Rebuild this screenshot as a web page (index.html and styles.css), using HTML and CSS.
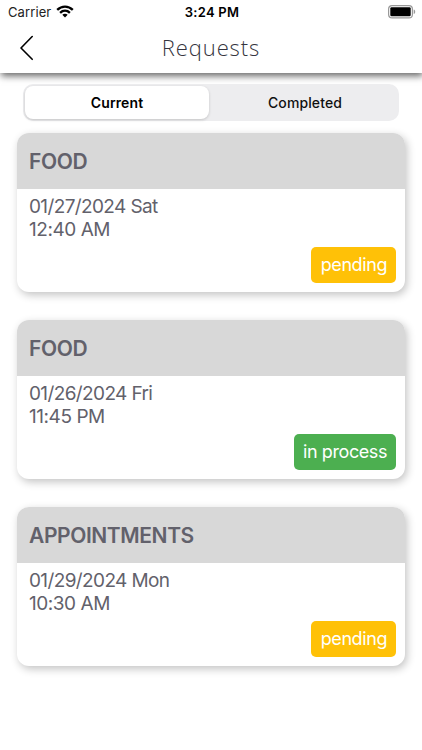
FILE: index.html
```html
<!DOCTYPE html>
<html lang="en">
<head>
<meta charset="utf-8">
<title>Requests</title>
<link rel="stylesheet" href="styles.css">
</head>
<body>
<header class="top">
  <div class="status">
    <div class="carrier"><span>Carrier</span>
      <svg width="18" height="13" viewBox="0 0 18 13" fill="none" stroke="#000" stroke-width="2.4"><path d="M1.2 4.8C5.8.5 12.2.5 16.8 4.8M4.1 7.8c2.9-2.7 6.9-2.7 9.8 0"/><path d="M6.3 9.8c1.6-1.4 3.8-1.4 5.4 0L9 12.6z" fill="#000" stroke="none"/></svg>
    </div>
    <time class="clock">3:24 PM</time>
    <svg class="battery" width="28" height="14" viewBox="0 0 28 14"><rect x=".6" y=".6" width="23.8" height="12.3" rx="3.5" fill="none" stroke="#999" stroke-width="1.2"/><rect x="2.3" y="2.3" width="20.4" height="8.9" rx="1.2"/><path d="M25.7 4.5c2 .6 2 3.9 0 4.5z" fill="#999"/></svg>
  </div>
  <nav class="bar">
    <svg class="back" width="14" height="26" viewBox="0 0 14 26" fill="none" stroke="#000" stroke-width="1.6" stroke-linecap="round" stroke-linejoin="round"><path d="M12.2 1.5 1 13l11.2 11.3"/></svg>
    <h1>Requests</h1>
  </nav>
</header>
<main>
  <div class="tabs"><button class="tab active">Current</button><button class="tab">Completed</button></div>
  <article class="card">
    <h2>FOOD</h2>
    <div class="body"><div><p class="date">01/27/2024 Sat</p><p>12:40 AM</p></div><span class="badge pending">pending</span></div>
  </article>
  <article class="card">
    <h2>FOOD</h2>
    <div class="body"><div><p class="date">01/26/2024 Fri</p><p>11:45 PM</p></div><span class="badge process">in process</span></div>
  </article>
  <article class="card">
    <h2>APPOINTMENTS</h2>
    <div class="body"><div><p class="date">01/29/2024 Mon</p><p>10:30 AM</p></div><span class="badge pending">pending</span></div>
  </article>
</main>
</body>
</html>
```
FILE: styles.css
```css
* { box-sizing: border-box; }
body { margin: 0; height: 750px; overflow: hidden; background: #fff; font-family: Inter, sans-serif; color: #000; }
.top { height: 73px; background: #fff; box-shadow: 1px 3px 7px rgba(0,0,0,.6); }
.status { height: 23px; display: grid; grid-template-columns: 1fr auto 1fr; align-items: center; padding: 0 6px 0 8px; }
.carrier { display: flex; align-items: center; gap: 5px; font-size: 13px; letter-spacing: .1px; color: #222; }
.clock { font-size: 13px; font-weight: 600; letter-spacing: .25px; }
.battery { justify-self: end; }
.bar { height: 50px; display: grid; grid-template-columns: 1fr auto 1fr; align-items: center; padding: 0 19.5px; }
h1 { margin: 0; padding-bottom: 2px; font: 300 22px/30px "Open Sans", sans-serif; letter-spacing: .9px; color: #353540; }
main { padding: 11px 17px 0; }
.tabs { display: flex; height: 37px; margin: 0 6px 12px; padding: 2px; border-radius: 10px; background: #ededef; }
.tab { flex: 1; border: 0; padding: 0 0 0 4px; border-radius: 8px; background: none; font: 500 14px Inter, sans-serif; letter-spacing: .12px; color: #111; }
.tab.active { flex: 0 0 184px; padding: 0; background: #fff; font-weight: 600; color: #000; box-shadow: 0 1px 3px rgba(0,0,0,.18); }
.card { height: 159px; margin-bottom: 28px; border-radius: 12px; background: #fff; box-shadow: 2px 3px 8px rgba(0,0,0,.24); color: #62616b; }
h2 { height: 56px; margin: 0; padding: 1px 12px 0; border-radius: 12px 12px 0 0; background: #d8d8d8; font-size: 21px; line-height: 56px; font-weight: 600; letter-spacing: -.4px; }
.body { height: 103px; display: flex; flex-direction: column; justify-content: space-between; padding: 7px 9px 9px 12px; }
p { margin: 0; font-size: 19px; line-height: 22.5px; letter-spacing: -.45px; }
.date { letter-spacing: -.62px; }
.badge { align-self: flex-end; height: 36px; padding: 0 9px 0 9.5px; border-radius: 5px; color: #fff; font-size: 18px; line-height: 36px; letter-spacing: -.42px; }
.pending { background: #ffc107; }
.process { background: #4caf50; }
```
